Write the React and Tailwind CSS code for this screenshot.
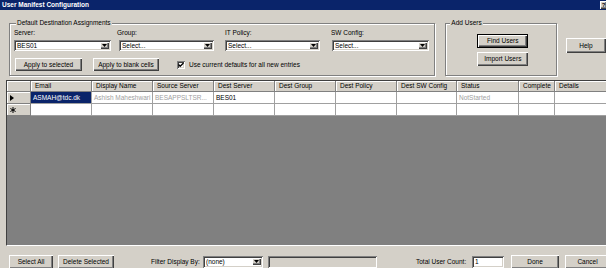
import React from "react";

const btn =
  "flex items-center justify-center bg-[#d4d0c8] shadow-[inset_1px_1px_0_#ffffff,inset_-1px_-1px_0_#404040,inset_-2px_-2px_0_#808080] whitespace-nowrap";
const sunken =
  "shadow-[inset_1px_1px_0_#808080,inset_-1px_-1px_0_#ffffff,inset_2px_2px_0_#404040,inset_-2px_-2px_0_#d4d0c8]";
const etched =
  "border border-[#808080] shadow-[inset_1px_1px_0_#ffffff,1px_1px_0_#ffffff]";

function Combo({ value, className }) {
  return (
    <div className={`flex items-center bg-white ${sunken} ${className}`}>
      <span className="pl-[3px] flex-1 truncate">{value}</span>
      <div className={`${btn} w-[9px] h-[7px] mr-[2px]`}>
        <svg width="5" height="3" viewBox="0 0 5 3">
          <path d="M0 0H5L2.5 3Z" fill="#000" />
        </svg>
      </div>
    </div>
  );
}

const headers = [
  "",
  "Email",
  "Display Name",
  "Source Server",
  "Dest Server",
  "Dest Group",
  "Dest Policy",
  "Dest SW Config",
  "Status",
  "Complete",
  "Details",
];

const hcell =
  "h-[11px] bg-[#d4d0c8] border-r border-b border-[#808080] shadow-[inset_1px_1px_0_#ffffff] pl-[4px] flex items-center whitespace-nowrap overflow-hidden";
const cellBase =
  "h-[12px] border-r border-b border-[#a0a0a0] pl-[2px] flex items-center whitespace-nowrap overflow-hidden";
const dcell = `${cellBase} bg-white`;
const rcell =
  "h-[12px] bg-[#d4d0c8] border-r border-b border-[#808080] shadow-[inset_1px_1px_0_#ffffff] flex items-center pl-[3px]";

export default function App() {
  return (
    <div className="w-[606px] h-[268px] overflow-hidden bg-[#d4d0c8] flex flex-col text-[6.5px] leading-[8px] text-black font-['Liberation_Sans',Arial,sans-serif]">
      {/* Title bar */}
      <div className="h-[10px] shrink-0 bg-[#0a246a] flex items-center justify-between pl-[2px]">
        <span className="text-white font-bold text-[6.5px] leading-[10px]">
          User Manifest Configuration
        </span>
        <div className={`${btn} w-[7px] h-[8px] font-bold text-[6px] mr-[-1px]`}>?</div>
      </div>

      {/* Top area */}
      <div className="h-[70px] shrink-0 flex pt-[13px] pl-[9px]">
        <div className={`relative w-[428px] h-[53px] ${etched} pt-[5px] pl-[4px]`}>
          <span className="absolute -top-[5px] left-[6px] px-[1px] bg-[#d4d0c8]">
            Default Destination Assignments
          </span>
          <div className="flex">
            <div className="w-[97px]">
              <div className="h-[8px]">Server:</div>
              <Combo value="BES01" className="mt-[3px] h-[11px] w-[97px]" />
            </div>
            <div className="w-[95px] ml-[8px]">
              <div className="h-[8px] -ml-[2px]">Group:</div>
              <Combo value="Select..." className="mt-[3px] h-[11px] w-[95px]" />
            </div>
            <div className="w-[95px] ml-[11px]">
              <div className="h-[8px]">IT Policy:</div>
              <Combo value="Select..." className="mt-[3px] h-[11px] w-[95px]" />
            </div>
            <div className="w-[97px] ml-[12px]">
              <div className="h-[8px] -ml-[1px]">SW Config:</div>
              <Combo value="Select..." className="mt-[3px] h-[11px] w-[97px]" />
            </div>
          </div>
          <div className="flex items-center mt-[7px]">
            <div className={`${btn} ml-[1px] w-[67px] h-[13px]`}>Apply to selected</div>
            <div className={`${btn} ml-[11px] w-[66px] h-[13px]`}>Apply to blank cells</div>
            <div className={`ml-[18px] w-[8px] h-[8px] bg-white ${sunken} flex items-center justify-center`}>
              <svg width="6" height="6" viewBox="0 0 6 6">
                <path d="M0.5 2.5L2.2 4.3L5.5 1" stroke="#000" strokeWidth="1.3" fill="none" />
              </svg>
            </div>
            <span className="ml-[4px] whitespace-nowrap">Use current defaults for all new entries</span>
          </div>
        </div>

        <div className={`relative ml-[10px] w-[112px] h-[53px] ${etched} flex flex-col pt-[10px] pl-[31px]`}>
          <span className="absolute -top-[5px] left-[4px] px-[1px] bg-[#d4d0c8]">Add Users</span>
          <div className={`${btn} border border-black w-[51px] h-[14px]`}>Find Users</div>
          <div className={`${btn} mt-[4px] w-[51px] h-[14px]`}>Import Users</div>
        </div>

        <div className={`${btn} ml-[9px] mt-[15px] w-[40px] h-[15px] shrink-0`}>Help</div>
      </div>

      {/* Grid */}
      <div className="ml-[6px] h-[166px] shrink-0 bg-[#808080] border-t border-l border-[#404040] border-b border-b-white overflow-hidden">
        <div className="grid grid-cols-[24px_61px_61px_61px_61px_61px_61px_60px_62px_36px_60px]">
          {headers.map((h, i) => (
            <div key={i} className={hcell}>
              {h}
            </div>
          ))}
          <div className={rcell}>
            <svg width="4" height="6" viewBox="0 0 4 6">
              <path d="M0 0L4 3L0 6Z" fill="#000" />
            </svg>
          </div>
          <div className={`${cellBase} bg-[#0a246a] text-white`}>ASMAH@tdc.dk</div>
          <div className={`${dcell} text-[#a0a0a0]`}>Ashish Maheshwari</div>
          <div className={`${dcell} text-[#a0a0a0]`}>BESAPPSLTSR...</div>
          <div className={dcell}>BES01</div>
          <div className={dcell}></div>
          <div className={dcell}></div>
          <div className={dcell}></div>
          <div className={`${dcell} text-[#a0a0a0]`}>NotStarted</div>
          <div className={dcell}></div>
          <div className={dcell}></div>

          <div className={rcell}>
            <svg width="6" height="6" viewBox="0 0 6 6">
              <path d="M3 0V6M0.4 1.5L5.6 4.5M0.4 4.5L5.6 1.5" stroke="#000" strokeWidth="1" />
            </svg>
          </div>
          {Array.from({ length: 10 }).map((_, i) => (
            <div key={i} className={dcell}></div>
          ))}
        </div>
      </div>

      {/* Bottom bar */}
      <div className="flex items-center pt-[9px] h-[22px] shrink-0">
        <div className={`${btn} ml-[9px] w-[44px] h-[14px] shrink-0`}>Select All</div>
        <div className={`${btn} ml-[5px] w-[56px] h-[14px] shrink-0`}>Delete Selected</div>
        <div className="ml-[37px] w-[52px] shrink-0 whitespace-nowrap">Filter Display By:</div>
        <Combo value="(none)" className="h-[12px] w-[60px] shrink-0" />
        <div className={`ml-[5px] w-[109px] h-[12px] bg-[#d4d0c8] ${sunken} shrink-0`}></div>
        <div className="ml-[39px] w-[56px] shrink-0 whitespace-nowrap">Total User Count:</div>
        <div className={`w-[32px] h-[12px] bg-white ${sunken} pl-[3px] flex items-center shrink-0`}>1</div>
        <div className={`${btn} ml-[7px] w-[48px] h-[14px] shrink-0`}>Done</div>
        <div className={`${btn} ml-[6px] w-[45px] h-[14px] shrink-0`}>Cancel</div>
      </div>
    </div>
  );
}
